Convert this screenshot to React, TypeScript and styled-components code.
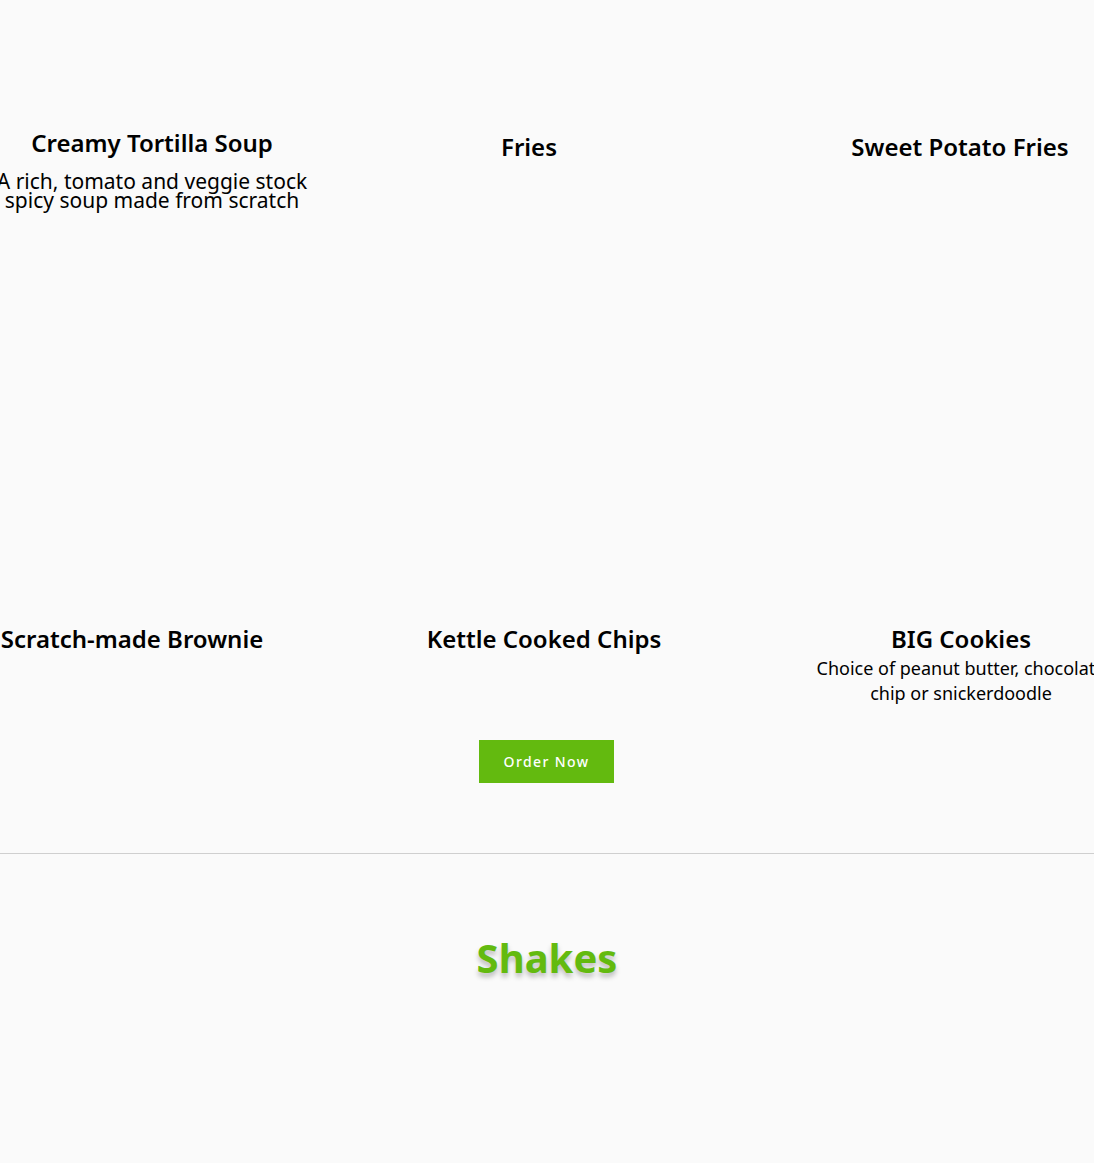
import React from "react";
import styled, { createGlobalStyle } from "styled-components";

const Global = createGlobalStyle`
  html, body { margin: 0; padding: 0; background: #fafafa; }
  body { overflow-x: hidden; font-family: "Noto Sans", "Open Sans", sans-serif; color: #000; }
`;

const Page = styled.div`
  width: 1094px;
  min-height: 1163px;
  background: #fafafa;
  overflow: hidden;
  display: flex;
  flex-direction: column;
`;

const Row = styled.div<{ $pt: number; $h?: number }>`
  display: flex;
  align-items: flex-start;
  padding-top: ${(p) => p.$pt}px;
  ${(p) => (p.$h ? `height: ${p.$h}px;` : "")}
  box-sizing: border-box;
`;

const Item = styled.div<{ $w: number; $ml: number; $dy?: number }>`
  flex: none;
  width: ${(p) => p.$w}px;
  margin-left: ${(p) => p.$ml}px;
  display: flex;
  flex-direction: column;
  align-items: center;
  text-align: center;
  padding-top: ${(p) => p.$dy ?? 0}px;
`;

const Title = styled.h3`
  margin: 0;
  font-size: 24px;
  font-weight: 600;
  line-height: 30px;
  white-space: nowrap;
  color: #000;
`;

const Desc = styled.p<{ $size: number; $lh: number; $mt: number }>`
  margin: ${(p) => p.$mt}px 0 0;
  font-size: ${(p) => p.$size}px;
  font-weight: 400;
  line-height: ${(p) => p.$lh}px;
  white-space: nowrap;
  color: #000;
`;

const ButtonRow = styled.div`
  display: flex;
  justify-content: center;
  margin-top: 34px;
`;

const OrderButton = styled.a`
  display: flex;
  align-items: center;
  justify-content: center;
  width: 135px;
  height: 43px;
  margin-left: -1px;
  background: #63ba0f;
  color: #fff;
  font-size: 14px;
  font-weight: 500;
  letter-spacing: 1.4px;
  text-decoration: none;
`;

const Divider = styled.hr`
  margin: 70px 0 0;
  border: none;
  border-top: 1px solid #cfcfcf;
  width: 100%;
`;

const SectionTitle = styled.h2`
  margin: 79px 0 0;
  text-align: center;
  font-size: 40px;
  font-weight: 700;
  line-height: 50px;
  color: #63ba0f;
  text-shadow: 0 4px 5px rgba(0, 0, 0, 0.25);
`;

export default function App() {
  return (
    <Page>
      <Global />
      <Row $pt={128} $h={624}>
        <Item $w={304} $ml={0}>
          <Title>Creamy Tortilla Soup</Title>
          <Desc $size={21} $lh={19} $mt={14}>
            A rich, tomato and veggie stock
            <br />
            spicy soup made from scratch
          </Desc>
        </Item>
        <Item $w={300} $ml={75} $dy={4}>
          <Title>Fries</Title>
        </Item>
        <Item $w={300} $ml={131} $dy={4}>
          <Title>Sweet Potato Fries</Title>
        </Item>
      </Row>
      <Row $pt={0}>
        <Item $w={264} $ml={0}>
          <Title>Scratch-made Brownie</Title>
        </Item>
        <Item $w={300} $ml={130}>
          <Title>Kettle Cooked Chips</Title>
        </Item>
        <Item $w={300} $ml={117}>
          <Title>BIG Cookies</Title>
          <Desc $size={18} $lh={25} $mt={2}>
            Choice of peanut butter, chocolate
            <br />
            chip or snickerdoodle
          </Desc>
        </Item>
      </Row>
      <ButtonRow>
        <OrderButton href="#">Order Now</OrderButton>
      </ButtonRow>
      <Divider />
      <SectionTitle>Shakes</SectionTitle>
    </Page>
  );
}
